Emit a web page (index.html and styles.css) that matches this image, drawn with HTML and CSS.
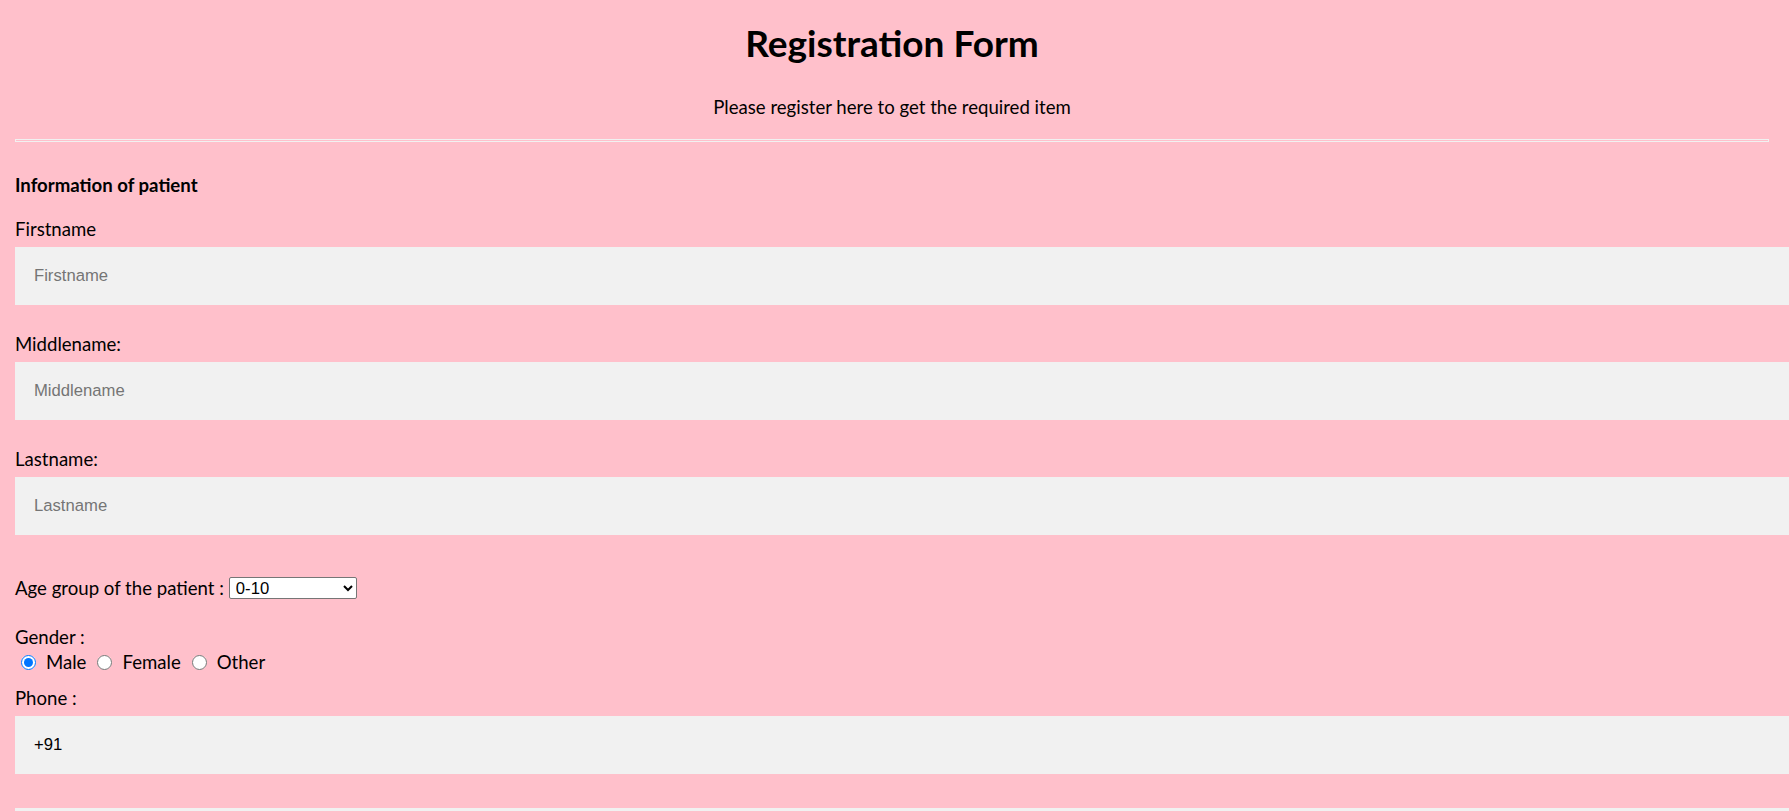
FILE: index.html
```html
<!DOCTYPE html>
<html lang="en">
<head>
<meta charset="utf-8">
<title>Registration Form</title>
<link rel="stylesheet" href="styles.css">
</head>
<body>
<form class="container">
  <h1 class="title">Registration Form</h1>
  <p class="subtitle">Please register here to get the required item</p>
  <hr class="divider">
  <h4 class="section">Information of patient</h4>

  <label class="field-label" for="firstname">Firstname</label>
  <input class="text-input" type="text" id="firstname" placeholder="Firstname">

  <label class="field-label" for="middlename">Middlename:</label>
  <input class="text-input" type="text" id="middlename" placeholder="Middlename">

  <label class="field-label" for="lastname">Lastname:</label>
  <input class="text-input" type="text" id="lastname" placeholder="Lastname">

  <div class="age-row">
    <label class="inline-label" for="age">Age group of the patient :</label>
    <select class="age-select" id="age">
      <option>0-10</option>
      <option>11-20</option>
      <option>21-40</option>
      <option>41-60</option>
      <option>60+</option>
    </select>
  </div>

  <div class="field-label gender-label">Gender :</div>
  <div class="radio-row">
    <label class="radio-option"><input class="radio" type="radio" name="gender" checked><span>Male</span></label>
    <label class="radio-option"><input class="radio" type="radio" name="gender"><span>Female</span></label>
    <label class="radio-option"><input class="radio" type="radio" name="gender"><span>Other</span></label>
  </div>

  <label class="field-label phone-label" for="phone">Phone :</label>
  <input class="text-input" type="text" id="phone" value="+91">
  <input class="text-input extra-input" type="text" id="phone2" placeholder="Phone number">
</form>
</body>
</html>
```

FILE: styles.css
```css
html, body {
  margin: 0;
  padding: 0;
}

body {
  background: #ffc0cb;
  color: #000;
  font-family: "Lato", sans-serif;
  font-size: 18.6px;
  overflow-x: hidden;
}

.container {
  padding: 0 20px 0 15px;
}

.title {
  margin: 21px 0 0;
  font-size: 37px;
  line-height: 44px;
  font-weight: 700;
  text-align: center;
}

.subtitle {
  margin: 30px 0 0;
  line-height: 24px;
  text-align: center;
}

.divider {
  margin: 20px 0 0;
  height: 1px;
  border: 1px solid #f1f1f1;
  box-sizing: content-box;
}

.section {
  margin: 31px 0 20px;
  font-size: 18.6px;
  line-height: 24px;
  font-weight: 700;
}

.field-label {
  display: block;
  line-height: 24px;
}

.text-input {
  display: block;
  width: 100%;
  margin: 6px 0 27px;
  padding: 19px;
  border: none;
  background: #f1f1f1;
  font-family: "Liberation Sans", Arial, sans-serif;
  font-size: 16.67px;
  line-height: 20px;
  color: #000;
  outline: none;
}

.text-input::placeholder {
  color: #757575;
}

.extra-input {
  margin-top: 34px;
}

.age-row {
  display: flex;
  align-items: center;
  margin-top: 42px;
  height: 22px;
}

.inline-label {
  line-height: 22px;
  margin-right: 5px;
}

.age-select {
  width: 128px;
  height: 22px;
  padding: 0 0 0 2px;
  border: 1px solid #767676;
  border-radius: 2px;
  background: #fff;
  font-family: "Liberation Sans", Arial, sans-serif;
  font-size: 16.67px;
  color: #000;
}

.gender-label {
  margin-top: 26px;
}

.radio-row {
  display: flex;
  align-items: center;
  height: 24px;
  margin-top: 1px;
  padding-left: 6px;
  line-height: 24px;
}

.radio-option {
  display: flex;
  align-items: center;
  margin-right: 11px;
}

.radio {
  width: 15px;
  height: 15px;
  margin: 0 10px 0 0;
}

.phone-label {
  margin-top: 12px;
}
```
